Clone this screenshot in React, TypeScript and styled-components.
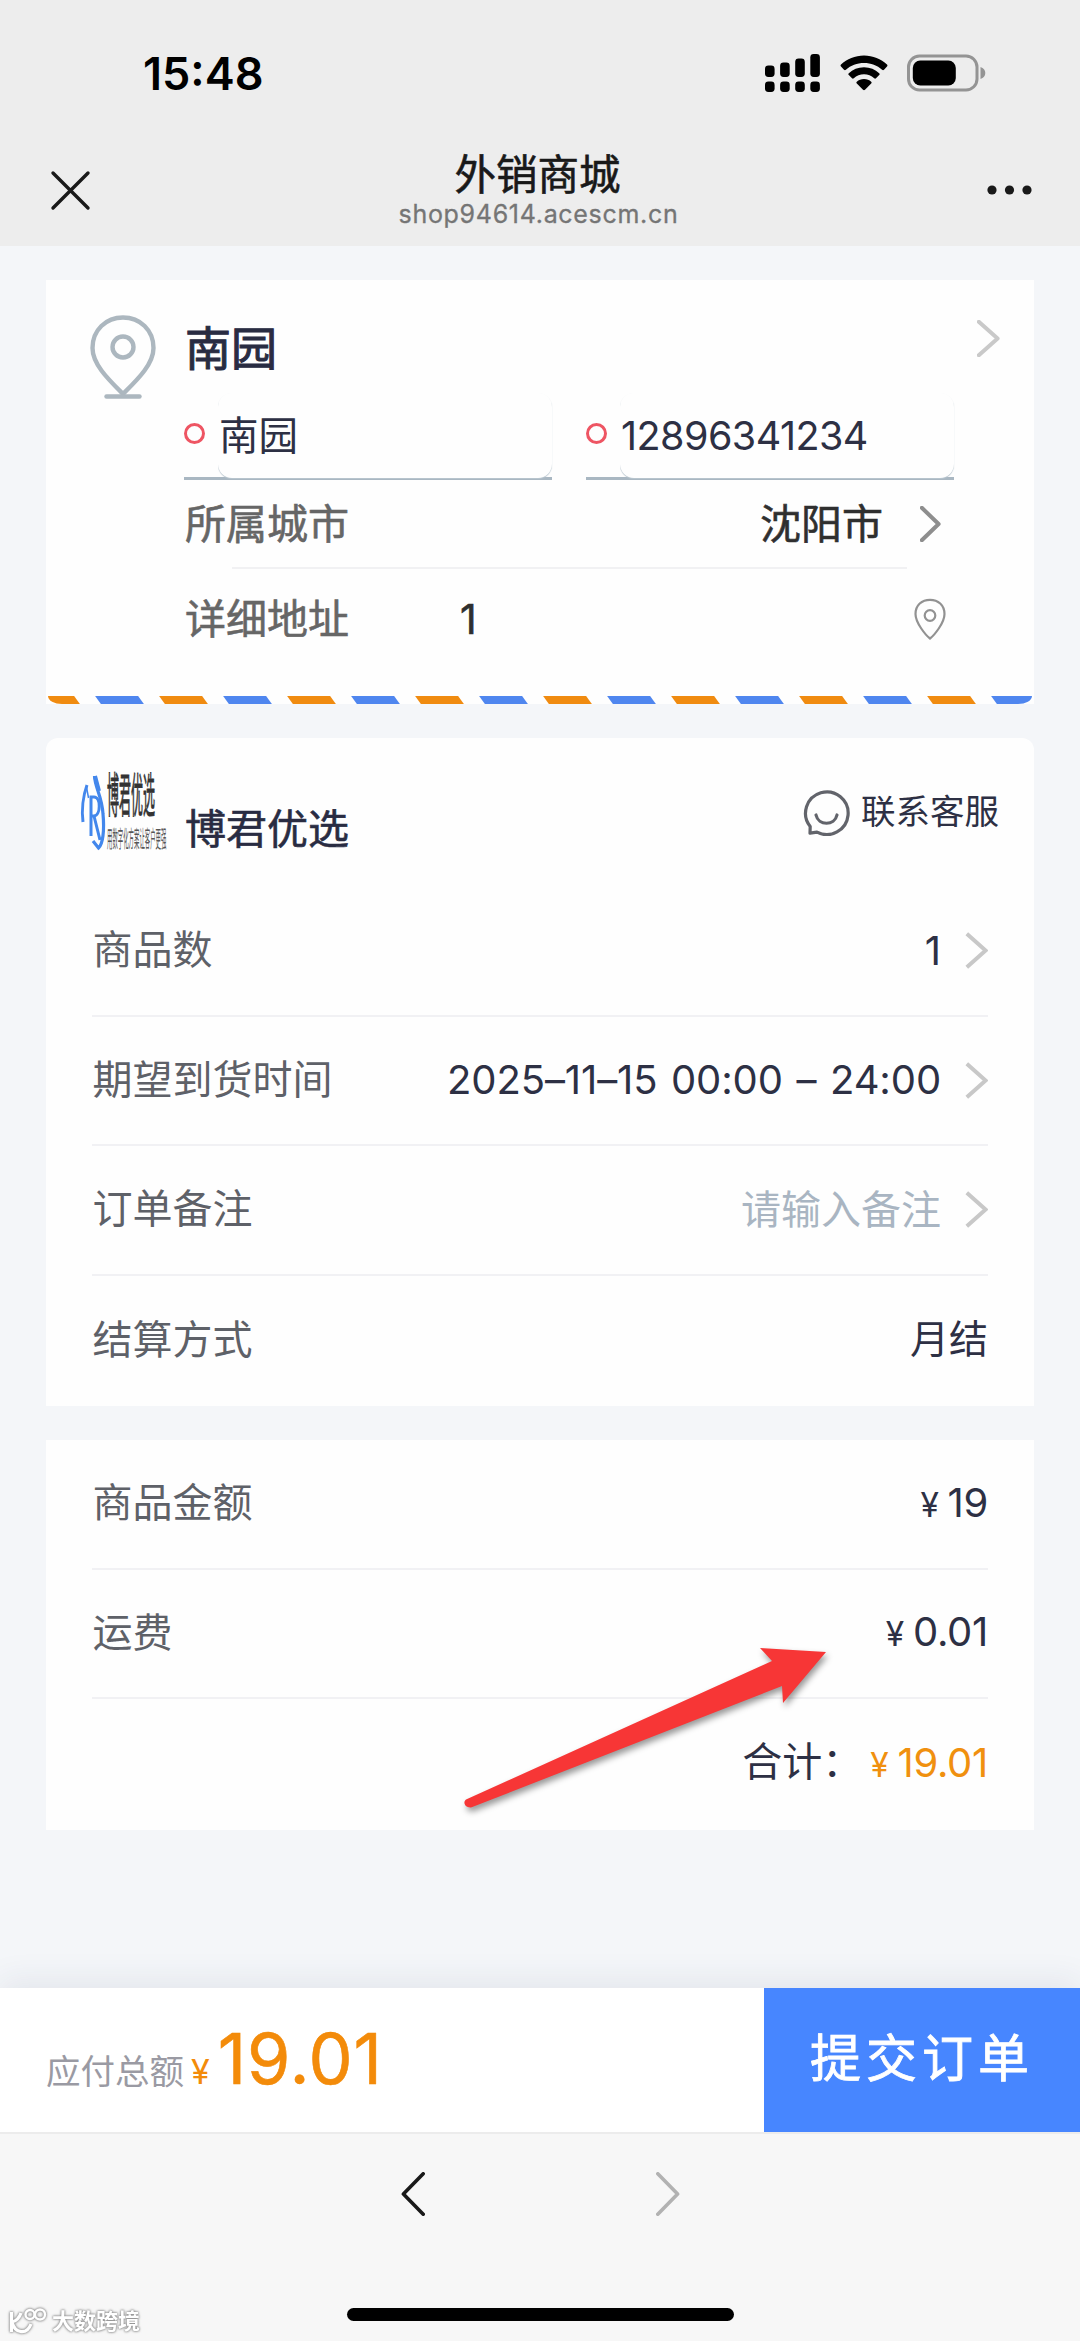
import React from 'react';
import styled, { createGlobalStyle } from 'styled-components';

const GlobalStyle = createGlobalStyle`
  * { box-sizing: border-box; }
  body {
    margin: 0;
    font-family: Inter, 'Noto Sans CJK SC', sans-serif;
    color: #2d3044;
    background: #f4f6f9;
  }
  svg { display: block; flex: none; }
`;

const Screen = styled.div`
  width: 1080px;
  height: 2341px;
  display: flex;
  flex-direction: column;
  overflow: hidden;
  position: relative;
  white-space: nowrap;
`;

const TopArea = styled.header`
  height: 246px;
  flex: none;
  background: #ededed;
`;

const StatusBar = styled.div`
  height: 136px;
  padding: 9px 94px 0 143px;
  display: flex;
  align-items: center;
  justify-content: space-between;
`;

const Clock = styled.span`
  font-size: 45px;
  font-weight: 600;
  line-height: 60px;
  letter-spacing: 0;
  padding-top: 2px;
  color: #000;
`;

const StatusIcons = styled.div`
  display: flex;
  align-items: center;
  gap: 19px;
`;

const NavBar = styled.div`
  height: 110px;
  padding: 0 48px 0 50px;
  display: grid;
  grid-template-columns: 60px 1fr 60px;
`;

const NavSlot = styled.div<{ $end?: boolean }>`
  padding-top: ${p => (p.$end ? 48 : 34)}px;
  display: flex;
  align-items: flex-start;
  justify-content: ${p => (p.$end ? 'flex-end' : 'flex-start')};
`;

const Titles = styled.div`
  display: flex;
  flex-direction: column;
  align-items: center;
  padding: 14px 5px 0 0;
`;

const PageTitle = styled.div`
  font-size: 41.5px;
  line-height: 50px;
  margin-left: -2px;
  color: #191919;
  -webkit-text-stroke: 0.6px #191919;
`;

const Host = styled.div`
  font-size: 25px;
  line-height: 28px;
  letter-spacing: 0.7px;
  color: #757575;
  -webkit-text-stroke: 0.3px #757575;
`;

const Content = styled.main`
  flex: 1;
  padding: 34px 46px 0 46px;
  display: flex;
  flex-direction: column;
  gap: 34px;
`;

const Card = styled.section<{ $height: number; $radius?: number }>`
  height: ${p => p.$height}px;
  flex: none;
  background: #fefefe;
  border-radius: ${p => p.$radius ?? 0}px ${p => p.$radius ?? 0}px 0 0;
  display: flex;
  flex-direction: column;
`;

const AddressBody = styled.div`
  flex: 1;
  display: grid;
  grid-template-columns: 94px 770px 1fr;
  padding-left: 44px;
`;

const AddressPin = styled.div`
  padding-top: 35px;
`;

const AddressMore = styled.div`
  padding: 40px 0 0 23px;
`;

const AddressMain = styled.div`
  display: flex;
  flex-direction: column;
  padding-top: 41px;
`;

const AddressName = styled.div`
  font-size: 46px;
  line-height: 54px;
  color: #292c42;
  padding-left: 1px;
  -webkit-text-stroke: 1px #292c42;
`;

const Fields = styled.div`
  display: grid;
  grid-template-columns: 368px 368px;
  gap: 34px;
  margin-top: 18px;
`;

const Field = styled.label`
  height: 87px;
  border-bottom: 3px solid #a9b7c2;
  display: flex;
  align-items: stretch;
`;

const RequiredMark = styled.i`
  width: 21px;
  height: 21px;
  margin: 30px 13px 0 0;
  border: 3px solid #ee5563;
  border-radius: 50%;
`;

const FieldValue = styled.span<{ $spacing?: number }>`
  flex: 1;
  height: 85px;
  padding-left: 1px;
  border-radius: 14px;
  box-shadow: 0 1px 1px #b9c6cf;
  clip-path: inset(0 -1px -1px 0);
  background: #fefefe;
  font-size: 39.5px;
  line-height: 87px;
  letter-spacing: ${p => p.$spacing ?? 0}px;
`;

const AddressRow = styled.div<{ $height: number }>`
  height: ${p => p.$height}px;
  display: flex;
  align-items: center;
  font-size: 41px;
  line-height: 50px;
  padding-right: 8px;
`;

const AddressLabel = styled.span`
  color: #666;
  width: 276px;
  padding-left: 1px;
  -webkit-text-stroke: 0.6px #666;
`;

const AddressValue = styled.span<{ $right?: boolean }>`
  flex: 1;
  color: #2f2f2f;
  text-align: ${p => (p.$right ? 'right' : 'left')};
  padding-right: ${p => (p.$right ? 37 : 0)}px;
  -webkit-text-stroke: 0.6px #2f2f2f;
`;

const RowChevronEnd = styled.span`
  margin-right: 5px;
`;

const ShortDivider = styled.div`
  height: 2px;
  margin: 0 47px 0 48px;
  background: #f1f1f3;
`;

const AirmailEdge = styled.div`
  height: 8px;
  margin: 0 2px;
  border-radius: 0 0 14px 14px / 0 0 8px 8px;
  overflow: hidden;
  display: flex;
  gap: 21px;
`;

const Dash = styled.i<{ $blue: boolean }>`
  flex: none;
  width: 43px;
  height: 8px;
  background: ${p => (p.$blue ? '#4f86ef' : '#f08b10')};
  transform: translateX(-14px) skewX(36deg);
`;

const ShopHeader = styled.div`
  height: 149px;
  padding: 30px 35px 0 32px;
  display: flex;
  align-items: flex-start;
`;

const ShopName = styled.div`
  flex: 1;
  margin: 36px 0 0 17px;
  font-size: 41px;
  line-height: 50px;
  color: #292c42;
  -webkit-text-stroke: 0.6px #292c42;
`;

const Contact = styled.div`
  display: flex;
  align-items: center;
  gap: 11px;
  margin-top: 18px;
  font-size: 34.5px;
  line-height: 52px;
`;

const Row = styled.div<{ $last?: boolean }>`
  height: 129.6px;
  margin: 0 46px;
  border-bottom: ${p => (p.$last ? 0 : 2)}px solid #f1f1f4;
  display: flex;
  align-items: center;
  font-size: 40px;
  line-height: 50px;
`;

const RowLabel = styled.span`
  color: #5e6168;
  padding: 0 0 1px 0.6px;
`;

const RowValue = styled.span<{ $muted?: boolean; $size?: number }>`
  margin-left: auto;
  color: ${p => (p.$muted ? '#a9b5c2' : '#2d3044')};
  font-size: ${p => p.$size ?? 40}px;
  padding-bottom: ${p => (p.$size ? 3 : 0)}px;
`;

const DateValue = styled(RowValue)`
  letter-spacing: -0.12px;
  word-spacing: 2.5px;
`;

const RowChevron = styled.span`
  margin-left: 24px;
`;

const Amount = styled.span<{ $accent?: boolean }>`
  display: flex;
  align-items: baseline;
  gap: 9px;
  color: ${p => (p.$accent ? '#f0900f' : '#2d3044')};
  letter-spacing: -0.3px;
`;

const Yen = styled.span`
  font-size: 33.5px;
`;

const SumLabel = styled.span`
  margin: 0 8px 3px auto;
`;

const PushRight = styled.span`
  margin-left: auto;
`;

const CheckoutBar = styled.footer`
  height: 144px;
  flex: none;
  display: flex;
  background: #fff;
  box-shadow: 0 -8px 30px rgba(40, 50, 90, 0.08);
`;

const TotalDue = styled.div`
  flex: 1;
  padding: 26px 0 0 46px;
  display: flex;
  align-items: baseline;
  line-height: 90px;
`;

const DueLabel = styled.span`
  font-size: 34.5px;
  color: #9a9aa3;
`;

const DueValue = styled.span`
  color: #f38b0a;
  font-size: 70px;
  letter-spacing: 0.8px;
  margin-left: 8px;
  -webkit-text-stroke: 0.6px #f38b0a;
`;

const DueYen = styled.span`
  color: #f38b0a;
  font-size: 34px;
  margin-left: 7px;
`;

const Submit = styled.button`
  width: 316px;
  border: 0;
  padding: 0 0 10px 0;
  background: #4786ff;
  color: #fff;
  font-family: inherit;
  font-size: 51px;
  letter-spacing: 5px;
  -webkit-text-stroke: 0.8px #fff;
`;

const BrowserBar = styled.nav`
  height: 209px;
  flex: none;
  border-top: 2px solid #ececec;
  background: #f7f7f7;
  display: flex;
  flex-direction: column;
  align-items: center;
`;

const HistoryButtons = styled.div`
  display: flex;
  justify-content: space-between;
  width: 279px;
  margin-top: 38px;
`;

const HomeIndicator = styled.div`
  width: 387px;
  height: 13px;
  margin-top: 92px;
  border-radius: 7px;
  background: #000;
`;

const Watermark = styled.div`
  position: absolute;
  left: 9px;
  top: 2305px;
  display: flex;
  align-items: center;
  gap: 5px;
  font-size: 22px;
  font-weight: 700;
  line-height: 32px;
  color: #fff;
  filter: drop-shadow(0 0 1.2px #888) drop-shadow(0 0 1px #aaa);
`;

const ArrowMark = styled.svg`
  position: absolute;
  left: 450px;
  top: 1630px;
  filter: drop-shadow(2px 4px 3px rgba(0, 0, 0, 0.4));
`;

type ChevronProps = { w?: number; h?: number; color?: string; stroke?: number; left?: boolean; round?: boolean };

const Chevron = ({ w = 23, h = 37, color = '#c8c8c8', stroke = 4, left, round }: ChevronProps) => {
  const a = 1.8;
  const pts = left
    ? `${w - a},${a} ${a + 0.6},${h / 2} ${w - a},${h - a}`
    : `${a},${a} ${w - a - 0.6},${h / 2} ${a},${h - a}`;
  return (
    <svg width={w} height={h}>
      <polyline points={pts} fill="none" stroke={color} strokeWidth={stroke}
        strokeLinecap={round ? 'round' : 'butt'} strokeLinejoin={round ? 'round' : 'miter'} />
    </svg>
  );
};

const SignalIcon = () => (
  <svg width="56" height="40" viewBox="0 0 56 40">
    {[12.5, 9.5, 5.5, 1].map((y, i) => (
      <g key={y}>
        <rect x={i * 15.1} y={y} width="9.6" height={24 - y} rx="3.4" />
        <rect x={i * 15.1} y="28.5" width="9.6" height="10.4" rx="3.4" />
      </g>
    ))}
  </svg>
);

const WifiIcon = () => (
  <svg width="48" height="36" viewBox="0 0 48 36">
    <path d="M24 0.5C33 .5 41 4 47 9.600c.6.6.6 1.400 0 2l-3 3.100c-.6.6-1.300.6-1.900 0C37.200 10.200 31 7.900 24 7.900S10.800 10.200 5.900 14.700c-.6.6-1.300.6-1.900 0l-3-3.100c-.6-.6-.6-1.400 0-2C7 4 15 .5 24 .5z" />
    <path d="M24 12.300c6 0 11.200 2.200 15.200 5.900.6.6.6 1.300 0 1.900l-3.200 3.200c-.6.6-1.200.5-1.800 0-2.800-2.500-6.300-4-10.200-4s-7.400 1.500-10.200 4c-.6.5-1.200.6-1.800 0l-3.200-3.200c-.6-.6-.6-1.300 0-1.900 4-3.700 9.200-5.900 15.200-5.900z" />
    <path d="M24 24c2.900 0 5.300 1 7.200 2.700.6.6.6 1.200 0 1.800l-6.200 6.300c-.6.6-1.400.6-2 0l-6.200-6.300c-.6-.6-.6-1.200 0-1.800C18.700 25 21.100 24 24 24z" />
  </svg>
);

const BatteryIcon = () => (
  <svg width="79" height="38" viewBox="0 0 79 38">
    <rect x="1.500" y="2" width="68.500" height="34" rx="11" fill="none" stroke="#949494" strokeWidth="3" />
    <rect x="5.800" y="6.500" width="43" height="25" rx="7.500" />
    <path d="M73.500 13c3 1 4.800 3.200 4.800 6S76.500 24 73.500 25z" fill="#949494" />
  </svg>
);

const CloseIcon = () => (
  <svg width="42" height="42" viewBox="0 0 42 42">
    <path d="M3 3 38 38M38 3 3 38" stroke="#191919" strokeWidth="3.400" strokeLinecap="round" />
  </svg>
);

const MoreIcon = () => (
  <svg width="45" height="12" viewBox="0 0 45 12">
    <circle cx="5" cy="6" r="4.600" fill="#191919" />
    <circle cx="22.500" cy="6" r="4.600" fill="#191919" />
    <circle cx="40" cy="6" r="4.600" fill="#191919" />
  </svg>
);

const AddressPinIcon = () => (
  <svg width="66" height="86" viewBox="0 0 66 86" fill="none" stroke="#acb7bf" strokeWidth="4.400">
    <path d="M33 79C18 64 2.500 49 2.500 33 2.500 15 16 2.500 33 2.500S63.500 15 63.500 33C63.500 49 48 64 33 79z" />
    <circle cx="33" cy="32" r="10.500" />
    <path d="M16.500 81.500H49.500" strokeLinecap="round" />
  </svg>
);

const SmallPinIcon = () => (
  <svg width="32" height="42" viewBox="0 0 32 42" fill="none" stroke="#929292" strokeWidth="2.200">
    <path d="M16 40.500C12 37.500 1.500 25 1.500 16 1.500 7 8 1.800 16 1.800S30.500 7 30.500 16C30.500 25 20 37.500 16 40.500z" strokeLinejoin="round" />
    <circle cx="16" cy="17.500" r="5.300" />
  </svg>
);

const ServiceIcon = () => (
  <svg width="47" height="47" viewBox="0 0 47 47" fill="none" stroke="#62646b" strokeWidth="3.200" strokeLinecap="round" strokeLinejoin="round">
    <path d="M7.200 37.500A21.300 21.300 0 1 1 14 43.100L7 44.200z" />
    <path d="M13 26c2.500 11 18.500 11 21 0" />
  </svg>
);

const ShopLogo = () => (
  <svg width="90" height="86" viewBox="0 0 90 86">
    <g fill="none" stroke="#4387ec">
      <path d="M9 17C5 28 3.500 43 5 54" strokeWidth="3" />
      <path d="M8.500 19 10.500 30" strokeWidth="1.500" />
      <path d="M16.500 8C17 20 24 28 25 46 26.500 62 25 76 20.500 80L15 73" strokeWidth="3.200" />
      <path d="M17 8 21 23" strokeWidth="4" />
      <path d="M13 68V29h3c7 0 7 18 0 19h-3M16 48l6 24" strokeWidth="3" />
    </g>
    <text transform="translate(29 44) scale(0.255 1)" fontSize="47" fill="#333" stroke="#333" strokeWidth="1">博君优选</text>
    <text transform="translate(29 79) scale(0.235 1)" fontSize="23" fill="#555">用数字化方案让客户更强</text>
  </svg>
);

const WatermarkIcon = () => (
  <svg width="38" height="26" viewBox="0 0 38 26" fill="none" stroke="#fff" strokeWidth="3.200">
    <path d="M2.500 4V24M12 5C10 11 7 13 3 14 6 26 18 27 22 16" />
    <circle cx="21" cy="6.500" r="4.500" strokeWidth="2.400" />
    <circle cx="31" cy="6.500" r="5" strokeWidth="2.400" />
  </svg>
);

const Money = ({ value, accent }: { value: string; accent?: boolean }) => (
  <Amount $accent={accent}><Yen>¥</Yen>{value}</Amount>
);

export default function App() {
  return (
    <>
      <GlobalStyle />
      <Screen>
        <TopArea>
          <StatusBar>
            <Clock>15:48</Clock>
            <StatusIcons><SignalIcon /><WifiIcon /><BatteryIcon /></StatusIcons>
          </StatusBar>
          <NavBar>
            <NavSlot><CloseIcon /></NavSlot>
            <Titles>
              <PageTitle>外销商城</PageTitle>
              <Host>shop94614.acescm.cn</Host>
            </Titles>
            <NavSlot $end><MoreIcon /></NavSlot>
          </NavBar>
        </TopArea>

        <Content>
          <Card $height={424}>
            <AddressBody>
              <AddressPin><AddressPinIcon /></AddressPin>
              <AddressMain>
                <AddressName>南园</AddressName>
                <Fields>
                  <Field><RequiredMark /><FieldValue>南园</FieldValue></Field>
                  <Field><RequiredMark /><FieldValue $spacing={-0.55}>12896341234</FieldValue></Field>
                </Fields>
                <AddressRow $height={87}>
                  <AddressLabel>所属城市</AddressLabel>
                  <AddressValue $right>沈阳市</AddressValue>
                  <RowChevronEnd><Chevron w={21} h={36} color="#8e8e8e" round /></RowChevronEnd>
                </AddressRow>
                <ShortDivider />
                <AddressRow $height={100}>
                  <AddressLabel>详细地址</AddressLabel>
                  <AddressValue>1</AddressValue>
                  <SmallPinIcon />
                </AddressRow>
              </AddressMain>
              <AddressMore><Chevron color="#c9c9c9" round /></AddressMore>
            </AddressBody>
            <AirmailEdge>
              {Array.from({ length: 16 }, (_, i) => <Dash key={i} $blue={i % 2 === 1} />)}
            </AirmailEdge>
          </Card>

          <Card $height={668} $radius={12}>
            <ShopHeader>
              <ShopLogo />
              <ShopName>博君优选</ShopName>
              <Contact><ServiceIcon />联系客服</Contact>
            </ShopHeader>
            <Row>
              <RowLabel>商品数</RowLabel>
              <RowValue>1</RowValue>
              <RowChevron><Chevron /></RowChevron>
            </Row>
            <Row>
              <RowLabel>期望到货时间</RowLabel>
              <DateValue>2025–11–15 00:00 – 24:00</DateValue>
              <RowChevron><Chevron /></RowChevron>
            </Row>
            <Row>
              <RowLabel>订单备注</RowLabel>
              <RowValue $muted>请输入备注</RowValue>
              <RowChevron><Chevron /></RowChevron>
            </Row>
            <Row $last>
              <RowLabel>结算方式</RowLabel>
              <RowValue $size={39}>月结</RowValue>
            </Row>
          </Card>

          <Card $height={390}>
            <Row>
              <RowLabel>商品金额</RowLabel>
              <PushRight><Money value="19" /></PushRight>
            </Row>
            <Row>
              <RowLabel>运费</RowLabel>
              <PushRight><Money value="0.01" /></PushRight>
            </Row>
            <Row $last>
              <SumLabel>合计：</SumLabel>
              <Money value="19.01" accent />
            </Row>
          </Card>
        </Content>

        <CheckoutBar>
          <TotalDue>
            <DueLabel>应付总额</DueLabel>
            <DueYen>¥</DueYen>
            <DueValue>19.01</DueValue>
          </TotalDue>
          <Submit>提交订单</Submit>
        </CheckoutBar>

        <BrowserBar>
          <HistoryButtons>
            <Chevron left w={24} h={44} color="#191919" stroke={3.6} round />
            <Chevron w={24} h={44} color="#b2b2b2" stroke={3.6} round />
          </HistoryButtons>
          <HomeIndicator />
        </BrowserBar>

        <ArrowMark width="400" height="190" viewBox="450 1630 400 190">
          <path d="M466 1799.500 772 1661 760 1648 826 1652 783 1703 782 1686 471 1807.500C465 1808 462.500 1802 466 1799.500z" fill="#f73636" />
        </ArrowMark>
        <Watermark><WatermarkIcon />大数跨境</Watermark>
      </Screen>
    </>
  );
}
